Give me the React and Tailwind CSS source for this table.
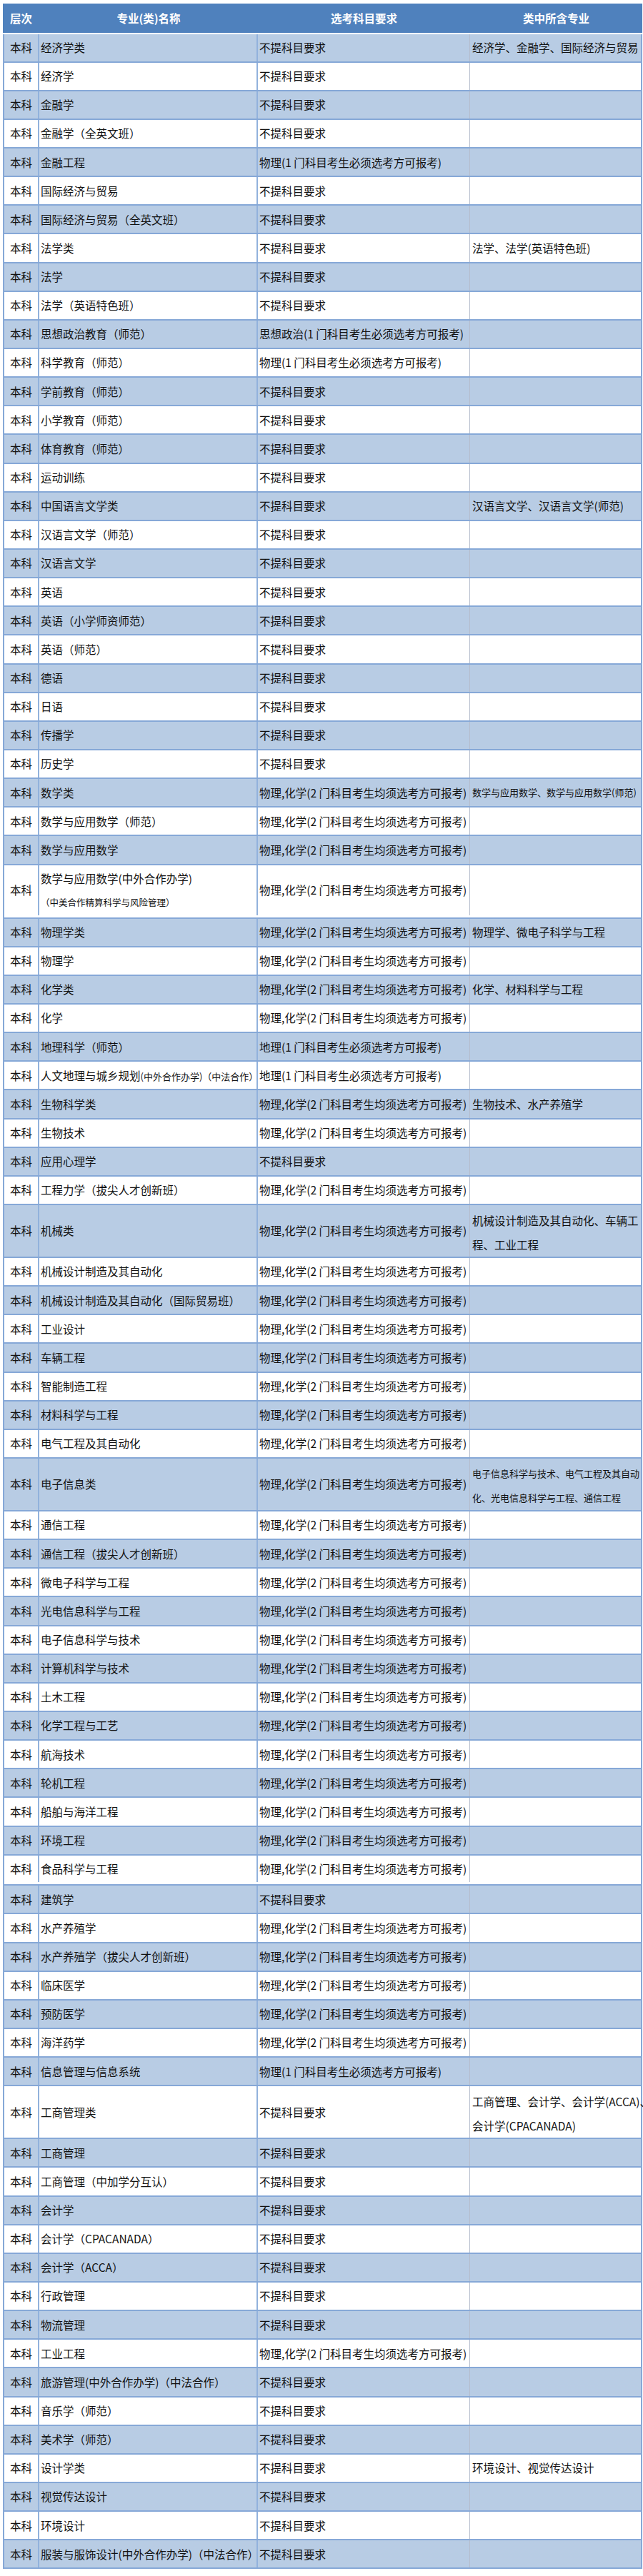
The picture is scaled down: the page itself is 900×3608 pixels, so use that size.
import React from 'react';

const N = '不提科目要求';
const P = '物理(1 门科目考生必须选考方可报考)';
const PC = '物理,化学(2 门科目考生均须选考方可报考)';
const G = '地理(1 门科目考生必须选考方可报考)';
const S = '思想政治(1 门科目考生必须选考方可报考)';

const rows = [
  { n: '经济学类', r: N, s: '经济学、金融学、国际经济与贸易' },
  { n: '经济学', r: N },
  { n: '金融学', r: N },
  { n: '金融学（全英文班）', r: N },
  { n: '金融工程', r: P },
  { n: '国际经济与贸易', r: N },
  { n: '国际经济与贸易（全英文班）', r: N },
  { n: '法学类', r: N, s: '法学、法学(英语特色班)' },
  { n: '法学', r: N },
  { n: '法学（英语特色班）', r: N },
  { n: '思想政治教育（师范）', r: S },
  { n: '科学教育（师范）', r: P },
  { n: '学前教育（师范）', r: N },
  { n: '小学教育（师范）', r: N },
  { n: '体育教育（师范）', r: N },
  { n: '运动训练', r: N },
  { n: '中国语言文学类', r: N, s: '汉语言文学、汉语言文学(师范)' },
  { n: '汉语言文学（师范）', r: N },
  { n: '汉语言文学', r: N },
  { n: '英语', r: N },
  { n: '英语（小学师资师范）', r: N },
  { n: '英语（师范）', r: N },
  { n: '德语', r: N },
  { n: '日语', r: N },
  { n: '传播学', r: N },
  { n: '历史学', r: N },
  {
    n: '数学类',
    r: PC,
    sn: <span className="text-[13px] whitespace-nowrap">数学与应用数学、数学与应用数学(师范)</span>,
  },
  { n: '数学与应用数学（师范）', r: PC },
  { n: '数学与应用数学', r: PC },
  {
    nn: (
      <div className="flex flex-col">
        <div className="leading-[20px]">数学与应用数学(中外合作办学)</div>
        <div className="text-[12.5px] leading-[18px] mt-[15px]">（中美合作精算科学与风险管理）</div>
      </div>
    ),
    r: PC,
    kind: 'tallgap',
  },
  { n: '物理学类', r: PC, s: '物理学、微电子科学与工程' },
  { n: '物理学', r: PC },
  { n: '化学类', r: PC, s: '化学、材料科学与工程' },
  { n: '化学', r: PC },
  { n: '地理科学（师范）', r: G },
  {
    nn: (
      <span>
        人文地理与城乡规划<span className="text-[13px]">(中外合作办学)（中法合作）</span>
      </span>
    ),
    r: G,
  },
  { n: '生物科学类', r: PC, s: '生物技术、水产养殖学' },
  { n: '生物技术', r: PC },
  { n: '应用心理学', r: N },
  { n: '工程力学（拔尖人才创新班）', r: PC },
  {
    n: '机械类',
    r: PC,
    sn: (
      <div className="leading-[34px] pt-[4px]">
        <div>机械设计制造及其自动化、车辆工</div>
        <div>程、工业工程</div>
      </div>
    ),
    kind: 'tall',
  },
  { n: '机械设计制造及其自动化', r: PC },
  { n: '机械设计制造及其自动化（国际贸易班）', r: PC },
  { n: '工业设计', r: PC },
  { n: '车辆工程', r: PC },
  { n: '智能制造工程', r: PC },
  { n: '材料科学与工程', r: PC },
  { n: '电气工程及其自动化', r: PC },
  {
    n: '电子信息类',
    r: PC,
    sn: (
      <div className="leading-[34px] pt-[4px] text-[13px] whitespace-nowrap">
        <div>电子信息科学与技术、电气工程及其自动</div>
        <div>化、光电信息科学与工程、通信工程</div>
      </div>
    ),
    kind: 'tall',
  },
  { n: '通信工程', r: PC },
  { n: '通信工程（拔尖人才创新班）', r: PC },
  { n: '微电子科学与工程', r: PC },
  { n: '光电信息科学与工程', r: PC },
  { n: '电子信息科学与技术', r: PC },
  { n: '计算机科学与技术', r: PC },
  { n: '土木工程', r: PC },
  { n: '化学工程与工艺', r: PC },
  { n: '航海技术', r: PC },
  { n: '轮机工程', r: PC },
  { n: '船舶与海洋工程', r: PC },
  { n: '环境工程', r: PC },
  { n: '食品科学与工程', r: PC, kind: 'gap' },
  { n: '建筑学', r: N },
  { n: '水产养殖学', r: PC },
  { n: '水产养殖学（拔尖人才创新班）', r: PC },
  { n: '临床医学', r: PC },
  { n: '预防医学', r: PC },
  { n: '海洋药学', r: PC },
  { n: '信息管理与信息系统', r: P },
  {
    n: '工商管理类',
    r: N,
    sn: (
      <div className="leading-[34px] pt-[4px] whitespace-nowrap">
        <div>工商管理、会计学、会计学(ACCA)、</div>
        <div>会计学(CPACANADA)</div>
      </div>
    ),
    kind: 'tall',
  },
  { n: '工商管理', r: N },
  { n: '工商管理（中加学分互认）', r: N },
  { n: '会计学', r: N },
  { n: '会计学（CPACANADA）', r: N },
  { n: '会计学（ACCA）', r: N },
  { n: '行政管理', r: N },
  { n: '物流管理', r: N },
  { n: '工业工程', r: PC },
  { n: '旅游管理(中外合作办学)（中法合作）', r: N },
  { n: '音乐学（师范）', r: N },
  { n: '美术学（师范）', r: N },
  { n: '设计学类', r: N, s: '环境设计、视觉传达设计' },
  { n: '视觉传达设计', r: N },
  { n: '环境设计', r: N },
  { n: '服装与服饰设计(中外合作办学)（中法合作）', r: N },
];

function heightClass(kind) {
  if (kind === 'tallgap') return 'h-[75px]';
  if (kind === 'tall') return 'h-[74px]';
  if (kind === 'gap') return 'h-[42.6px]';
  return 'h-[40.15px]';
}

function Row({ row, i }) {
  const bg = i % 2 === 0 ? 'bg-[#b8cce4]' : 'bg-white';
  const hasGap = row.kind === 'gap' || row.kind === 'tallgap';
  return (
    <div
      className={`flex flex-col ${heightClass(row.kind)} ${bg} border-b-2 border-l-2 border-r-2 border-[#86a8d7]`}
    >
      <div className="flex flex-1 min-h-0">
        <div className="w-[49px] shrink-0 flex items-center justify-center border-r-2 border-[#92b2dc]">
          本科
        </div>
        <div className="w-[306px] shrink-0 flex items-center pl-[2px] border-r-2 border-[#92b2dc] whitespace-nowrap">
          {row.nn || row.n}
        </div>
        <div className="w-[297px] shrink-0 flex items-center pl-[2px] border-r border-[#b4bccc] whitespace-nowrap">
          {row.r}
        </div>
        <div className="flex-1 min-w-0 flex items-center pl-[3px] whitespace-nowrap">{row.sn || row.s}</div>
      </div>
      {hasGap && <div className="h-[3px] bg-white" />}
    </div>
  );
}

export default function App() {
  return (
    <div className="w-[900px] bg-white pt-[5px] pb-[8px] font-['Noto_Sans_CJK_SC','Microsoft_YaHei',sans-serif] text-[15.5px] text-[#111]">
      <div className="ml-[4px] w-[895px]">
        <div className="flex h-[42.5px] bg-[#4f81bd] border-b-2 border-white text-white font-bold">
          <div className="w-[51px] shrink-0 flex items-center justify-center">层次</div>
          <div className="w-[306px] shrink-0 flex items-center justify-center">专业(类)名称</div>
          <div className="w-[297px] shrink-0 flex items-center justify-center">选考科目要求</div>
          <div className="flex-1 flex items-center justify-center">类中所含专业</div>
        </div>
        {rows.map((row, i) => (
          <Row key={i} row={row} i={i} />
        ))}
      </div>
    </div>
  );
}
